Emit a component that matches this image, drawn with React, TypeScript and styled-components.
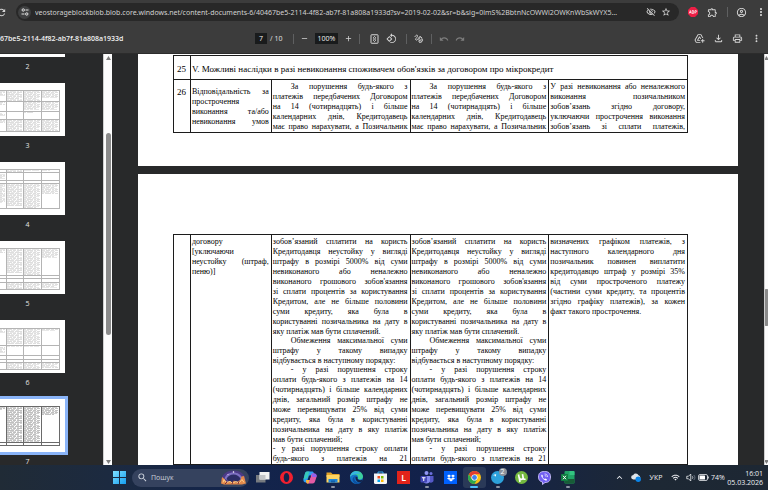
import React from 'react';
import styled, { createGlobalStyle, css } from 'styled-components';
import {
  MdAdd,
  MdAddToDrive,
  MdKeyboardArrowUp,
  MdMoreVert,
  MdOutlineAccountCircle,
  MdOutlineExtension,
  MdOutlineFileDownload,
  MdOutlinePrint,
  MdOutlineVisibilityOff,
  MdRedo,
  MdRefresh,
  MdRemove,
  MdRotate90DegreesCcw,
  MdSearch,
  MdStarBorder,
  MdUndo,
  MdWifi,
} from 'react-icons/md';
import { FaDropbox, FaTelegramPlane } from 'react-icons/fa';

const ui = '"Open Sans", "Noto Sans", sans-serif';
const uiWide = '"Noto Sans", "Open Sans", sans-serif';
const serif = '"Liberation Serif", "Times New Roman", serif';

const GlobalStyle = createGlobalStyle`
  * { box-sizing: border-box; }
  body { margin: 0; background: #28292a; }
  button, input { font: inherit; color: inherit; border: 0; padding: 0; margin: 0; background: none; }
  button { display: flex; align-items: center; justify-content: center; }
`;

const Screen = styled.div`
  display: flex;
  flex-direction: column;
  height: 100vh;
  overflow: hidden;
  font-family: ${ui};
  font-size: 7px;
  color: #e3e3e3;
`;

/* Browser chrome */

const AddressRow = styled.header`
  display: flex;
  align-items: center;
  height: 24px;
  flex: none;
  background: #3c3c3c;
`;

const IconButton = styled.button<{ $w?: number; $dim?: boolean }>`
  width: ${(p) => p.$w ?? 12}px;
  height: 16px;
  flex: none;
  color: ${(p) => (p.$dim ? '#7d7d7d' : '#d6d6d6')};
`;

const ReloadButton = styled(IconButton)`
  margin: 0 9px 0 -5px;
`;

const AddressPill = styled.div`
  display: flex;
  align-items: center;
  flex: 1;
  min-width: 0;
  height: 18px;
  padding: 0 6px 0 2px;
  border-radius: 9px;
  background: #282828;
`;

const SiteButton = styled.button`
  width: 13px;
  height: 13px;
  flex: none;
  margin-right: 4px;
  border-radius: 50%;
  background: #3f4041;
`;

const UrlInput = styled.input`
  flex: 1;
  min-width: 0;
  height: 16px;
  outline: none;
  font-family: ${uiWide};
  color: #d2d2d2;
`;

const Extensions = styled.div`
  display: flex;
  align-items: center;
  justify-content: space-between;
  flex: none;
  width: 89px;
  padding: 0 1px 0 8px;
`;

const Divider = styled.span<{ $gap?: number }>`
  width: 1px;
  height: 10px;
  flex: none;
  margin: 0 ${(p) => p.$gap ?? 0}px;
  background: #5f6061;
`;

/* PDF toolbar */

const PdfToolbar = styled.div`
  display: grid;
  grid-template-columns: minmax(0, 255fr) 212px minmax(0, 301fr);
  align-items: center;
  height: 30px;
  flex: none;
  background: #3c3c3c;
  border-bottom: 1px solid #2c2c2c;
`;

const FileName = styled.h1`
  margin: 0;
  font-size: 7px;
  line-height: 10px;
  font-weight: 600;
  white-space: nowrap;
  color: #f1f1f1;
`;

const Tools = styled.div`
  display: flex;
  align-items: center;
`;

const FieldInput = styled.input<{ $w: number }>`
  width: ${(p) => p.$w}px;
  height: 11px;
  flex: none;
  text-align: center;
  background: #191b1c;
  color: #f1f1f1;
`;

const PageTotal = styled.span`
  width: 20px;
  padding-left: 3px;
  white-space: nowrap;
`;

const ZoomGroup = styled.div`
  display: flex;
  align-items: center;
  gap: 6px;
`;

const UndoGroup = styled.div`
  display: flex;
  gap: 4px;
`;

const FileActions = styled.div`
  display: flex;
  justify-content: flex-end;
  gap: 7px;
  padding-right: 6px;
`;

/* Work area */

const WorkArea = styled.main`
  display: flex;
  flex: 1;
  min-height: 0;
  overflow: hidden;
`;

const Sidebar = styled.nav`
  width: 103px;
  flex: none;
  overflow: hidden;
  background: #28292a;
`;

const ThumbList = styled.ol`
  list-style: none;
  width: 75px;
  margin: -50px 0 0 -10px;
  padding: 0;
`;

const ThumbButton = styled.button<{ $selected: boolean }>`
  display: block;
  width: 75px;
  height: 53px;
  background: #fff;
  ${(p) =>
    p.$selected &&
    css`
      outline: 3px solid #8ab4f8;
    `}
`;

const ThumbLabel = styled.span`
  display: block;
  height: 26px;
  line-height: 20px;
  text-align: center;
  font-size: 7px;
`;

const ScrollTrack = styled.div<{ $w: number }>`
  display: flex;
  flex-direction: column;
  align-items: center;
  width: ${(p) => p.$w}px;
  flex: none;
  overflow: hidden;
  padding: 2px 0 1px;
  background: #fcfcfc;
  border-left: 1px solid #cfcfcf;
`;

const ScrollRun = styled.div<{ $before: number; $after: number }>`
  display: flex;
  flex-direction: column;
  flex: 1;
  &::before { content: ''; flex: ${(p) => p.$before}; }
  &::after { content: ''; flex: ${(p) => p.$after}; }
`;

const ScrollHandle = styled.div<{ $size: number }>`
  flex: ${(p) => p.$size};
  width: 5px;
  border-radius: 3px;
  background: #8b8b8b;
`;

const Viewer = styled.div`
  display: flex;
  flex-direction: column;
  gap: 8px;
  flex: 1;
  min-width: 0;
  overflow: hidden;
  padding: 0 26px;
  background: #28292a;
`;

const Sheet = styled.section<{ $top: number; $bottom: number }>`
  flex: none;
  padding: ${(p) => p.$top}px 50px ${(p) => p.$bottom}px 35px;
  background: #fff;
`;

const TermsTable = styled.table`
  width: 100%;
  table-layout: fixed;
  border-collapse: collapse;
  font-family: ${serif};
  font-size: 8px;
  line-height: 10px;
  color: #000;
`;

const Cell = styled.td<{ $top?: number; $center?: boolean; $large?: boolean; $soft?: boolean }>`
  padding: ${(p) => p.$top ?? 2}px 2px 0 1px;
  vertical-align: top;
  text-align: ${(p) => (p.$center ? 'center' : 'left')};
  border: 1px solid #1c1c1c;
  ${(p) =>
    p.$large &&
    css`
      font-size: 9px;
    `}
  ${(p) =>
    p.$soft &&
    css`
      border-left-color: #555;
    `}
`;

const TitleRow = styled.tr`
  height: 24px;
`;

const TitleCell = styled(Cell)`
  vertical-align: middle;
`;

const Paragraph = styled.p<{ $indent?: boolean }>`
  margin: 0;
  padding: 0;
  text-indent: ${(p) => (p.$indent ? 18 : 0)}px;
  & + & { margin-top: -1px; }
`;

const TextLine = styled.span<{ $last?: boolean }>`
  display: block;
  white-space: nowrap;
  text-align: justify;
  text-align-last: ${(p) => (p.$last ? 'left' : 'justify')};
  & + & { text-indent: 0; }
`;

/* Taskbar */

const Taskbar = styled.footer`
  display: grid;
  grid-template-columns: minmax(0, 112fr) 468px minmax(0, 188fr);
  align-items: center;
  height: 25px;
  flex: none;
  background: linear-gradient(90deg, #202b36 0%, #1c2a40 14%, #13244b 30%, #12214a 58%, #182540 72%, #1d2834 85%, #1d2733 100%);
`;

const AppStrip = styled.div`
  grid-column: 2;
  display: flex;
  align-items: center;
`;

const StartButton = styled.button`
  width: 14px;
  height: 20px;
  flex: none;
  margin-right: 6px;
`;

const SearchBox = styled.label`
  display: flex;
  align-items: center;
  width: 117px;
  height: 18px;
  flex: none;
  margin-right: 2px;
  padding: 0 2px 0 5px;
  border-radius: 9px;
  background: #35425e;
  color: #d5dae3;
`;

const SearchInput = styled.input`
  flex: 1;
  min-width: 0;
  margin-left: 3px;
  outline: none;
  font-size: 7px;
  &::placeholder { color: #c9cfda; opacity: 1; }
`;

const Apps = styled.div`
  display: grid;
  grid-template-columns: repeat(14, 1fr);
  flex: 1;
`;

const AppButton = styled.button<{ $active?: boolean; $running?: boolean }>`
  position: relative;
  height: 21px;
  border-radius: 3px;
  background: ${(p) => (p.$active ? '#2a3958' : 'none')};
  ${(p) =>
    (p.$running || p.$active) &&
    css`
      &::after {
        content: '';
        position: absolute;
        left: 50%;
        bottom: 0;
        width: ${p.$active ? 8 : 4}px;
        height: 2px;
        transform: translateX(-50%);
        border-radius: 1px;
        background: ${p.$active ? '#4cc2ff' : '#8d95a5'};
      }
    `}
`;

const Tile = styled.span<{ $bg: string }>`
  display: flex;
  align-items: center;
  justify-content: center;
  width: 13px;
  height: 13px;
  background: ${(p) => p.$bg};
  color: #fff;
  font-size: 9px;
  font-weight: 600;
`;

const Badge = styled.span`
  position: absolute;
  top: 1px;
  right: 3px;
  width: 8px;
  height: 8px;
  border-radius: 50%;
  background: #8a929c;
  color: #fff;
  font-size: 7px;
  line-height: 8px;
  text-align: center;
`;

const Tray = styled.div`
  display: flex;
  align-items: center;
  justify-content: flex-end;
  padding-right: 5px;
  color: #eef0f3;
`;

const TrayButton = styled.button<{ $w: number }>`
  width: ${(p) => p.$w}px;
  height: 18px;
  flex: none;
`;

const Battery = styled.span`
  display: flex;
  align-items: center;
  gap: 2px;
  width: 27px;
  white-space: nowrap;
`;

const Clock = styled.time`
  width: 38px;
  line-height: 9px;
  text-align: right;
`;

/* Drawings */

const SiteIcon = () => (
  <svg width="8" height="8" viewBox="0 0 16 16" fill="none" stroke="#e3e3e3" strokeWidth="2">
    <circle cx="4.5" cy="4" r="2.4" />
    <path d="M9 4h6M1 12h6" />
    <circle cx="11.5" cy="12" r="2.4" />
  </svg>
);

const AbpIcon = () => (
  <svg width="10" height="10" viewBox="0 0 20 20">
    <path d="M6 0h8l6 6v8l-6 6H6l-6-6V6z" fill="#ed1e45" />
    <path d="M2.6 13l2-6 2 6M3.2 11h2.8M8.4 7v6h2c2.2 0 2.2-3 0-3 1.8 0 1.8-3 0-3zM14 13V7h1.6c2.4 0 2.4 3.4 0 3.4H14" fill="none" stroke="#fff" strokeWidth="1.4" />
  </svg>
);

const FitIcon = () => (
  <svg width="9" height="10" viewBox="0 0 18 20" fill="none" stroke="currentColor" strokeWidth="2">
    <rect x="2" y="1.5" width="14" height="17" rx="1" />
    <path d="M6.4 7.5L9 5l2.6 2.5M6.4 12.5L9 15l2.6-2.5M6 10h6" />
  </svg>
);

const InkIcon = () => (
  <svg width="10" height="10" viewBox="0 0 20 20" fill="none" stroke="currentColor" strokeWidth="1.9" strokeLinecap="round">
    <path d="M2 5c2-3 5-4 5-1S1 10 4 12s6-7 8-7-4 7-2 8 3-2 5-3 3 3 1 5-5 3-6 1 2-3 5-2" />
    <path d="M13 5.5l3 2.5" />
  </svg>
);

type Box = [number, number, number, number];
type Preview = { page: number; rows: number[]; blocks: Box[]; dark?: boolean };

const pagePreviews: Preview[] = [
  { page: 2, rows: [8, 30, 48], blocks: [] },
  {
    page: 3,
    rows: [7, 18, 28, 36, 48],
    blocks: [
      [10, 8, 15, 12], [17, 8, 32, 17], [34, 8, 50, 17], [52, 8, 68, 14],
      [10, 19, 15, 21], [34, 19, 50, 26], [52, 19, 68, 26],
      [10, 30, 15, 32], [34, 29, 43, 29],
      [10, 37, 15, 39], [17, 37, 32, 47], [34, 37, 50, 47], [52, 37, 68, 47],
    ],
  },
  {
    page: 4,
    rows: [7, 10, 18, 21, 46],
    blocks: [
      [17, 8, 32, 9], [34, 8, 50, 8], [52, 8, 60, 8], [10, 12, 15, 16],
      [10, 22, 15, 40], [17, 22, 32, 43], [34, 22, 50, 45], [52, 22, 68, 31],
    ],
  },
  {
    page: 5,
    rows: [7, 34, 37, 41, 48],
    blocks: [
      [10, 8, 15, 11], [17, 8, 32, 31], [34, 8, 50, 33], [52, 8, 68, 16],
      [17, 42, 32, 47], [34, 42, 50, 47], [52, 42, 68, 46],
    ],
  },
  {
    page: 6,
    rows: [8, 25, 35, 39, 42, 49],
    blocks: [
      [10, 9, 15, 12], [17, 9, 32, 23], [34, 9, 50, 23], [52, 9, 68, 10],
      [10, 27, 15, 32], [17, 26, 32, 26], [34, 26, 50, 26],
      [17, 43, 32, 48], [34, 43, 50, 48], [52, 43, 68, 47],
    ],
  },
  {
    page: 7,
    dark: true,
    rows: [7, 43, 46],
    blocks: [[10, 8, 15, 10], [17, 8, 32, 42], [34, 8, 50, 42], [52, 8, 68, 15]],
  },
];

const columnRules = [1, 16, 33, 51, 69];
const dashes = ['5 1 3 1', '2 1 6 1', '7 1', '3 1 4 1'];

const CopyBlock = ({ box: [x1, y1, x2, y2], color }: { box: Box; color: string }) => (
  <g stroke={color}>
    {Array.from({ length: y2 - y1 + 1 }, (_, i) => y1 + i).map((y) => (
      <path
        key={y}
        d={`M${x1} ${y + 0.5}H${x2 - ((y * 7) % 5 === 0 ? 3 : 0)}`}
        strokeDasharray={dashes[(y * 3 + x1) % 4]}
        opacity={y % 2 ? 1 : 0.7}
      />
    ))}
  </g>
);

const PagePreview = ({ rows, blocks, dark }: Omit<Preview, 'page'>) => (
  <svg width="75" height="53" viewBox="0 0 75 53">
    {blocks.map((box) => (
      <CopyBlock key={box.join()} box={box} color={dark ? '#c0c0c0' : '#dedede'} />
    ))}
    <g stroke={dark ? '#6a6a6a' : '#b4b4b4'}>
      {rows.map((y) => (
        <path key={y} d={`M1 ${y + 0.5}H69`} />
      ))}
      {columnRules.map((x) => (
        <path key={x} d={`M${x + 0.5} ${rows[0]}V${rows[rows.length - 1] + 1}`} />
      ))}
    </g>
  </svg>
);

const ArrowMark = ({ down }: { down?: boolean }) => (
  <svg width="5" height="4" viewBox="0 0 5 4">
    <path d={down ? 'M0 0h5L2.5 4z' : 'M0 4h5L2.5 0z'} fill="#7d7d7d" />
  </svg>
);

const StartIcon = () => (
  <svg width="13" height="13" viewBox="0 0 26 26">
    <defs>
      <linearGradient id="start" x1="0" y1="0" x2="1" y2="1">
        <stop offset="0" stopColor="#7fe0ff" />
        <stop offset="1" stopColor="#149df0" />
      </linearGradient>
    </defs>
    <path d="M0 0h12v12H0zM14 0h12v12H14zM0 14h12v12H0zM14 14h12v12H14z" fill="url(#start)" />
  </svg>
);

const SearchArt = () => (
  <svg width="27" height="15" viewBox="0 0 54 30">
    <path d="M3 19C5 7 15 1 27 1s22 6 24 18l-6 9H9z" fill="#4b3a86" />
    <path d="M9 17C12 8 19 5 27 5s15 4 18 12l-8 5H17z" fill="#7d70c2" />
    <path d="M13 18c2-6 8-9 14-9s12 3 14 9l-6 6H19z" fill="#2c2d66" />
    <path d="M2 27l2-13 4 3 3 4 4 4 5-3 4 3 4-4 4 4 5-3 4-2 2-7 5-1 4 15-8 2H8z" fill="#e2894a" />
    <path d="M6 25l2-6 4 6 8-2 5 3 7-3 6 3 6-7 4 6" fill="none" stroke="#ffd08a" strokeWidth="2" />
    <path d="M10 28l4-4M24 28l2-5M36 28l2-5" stroke="#7b2c3a" strokeWidth="2" />
    <circle cx="27" cy="4" r="1.5" fill="#fff" />
    <circle cx="16" cy="9" r="1" fill="#ffd9f0" />
  </svg>
);

const TaskViewIcon = () => (
  <svg width="14" height="13" viewBox="0 0 28 26">
    <rect x="0" y="8" width="19" height="15" fill="#777b80" />
    <rect x="7" y="2" width="20" height="15" fill="#f1f1f1" />
    <rect x="7" y="8" width="12" height="9" fill="#c3c5c8" />
  </svg>
);

const OperaIcon = () => (
  <svg width="13" height="13" viewBox="0 0 26 26">
    <path fillRule="evenodd" d="M13 0a13 13 0 100 26 13 13 0 000-26zm0 4c3.3 0 5.5 4 5.5 9s-2.2 9-5.5 9-5.5-4-5.5-9S9.7 4 13 4z" fill="#f0202f" />
  </svg>
);

const CopilotIcon = () => (
  <svg width="14" height="13" viewBox="0 0 28 26">
    <path d="M9 1h9c2 0 3 1 3.5 3L23 9h-8l-3 9-2 5H6c-4 0-6-3-5-7L4 5c.8-2.5 2-4 5-4z" fill="#2b9df4" />
    <path d="M4 5C5 2 6 1 9 1h4L9 14l-8 3z" fill="#37c8b8" />
    <path d="M19 25h-9c-2 0-3-1-3.5-3L6 18h7l3-9 2-4h4c4 0 6 3 5 7l-3 9c-.8 2.5-2 4-5 4z" fill="#e45ba5" />
    <path d="M6 18h7l-2 7h-1c-2 0-3-1-3.5-3z" fill="#f6b73c" />
    <path d="M18 5h4c4 0 6 3 5 7h-9z" fill="#9061ee" />
    <path d="M13 18l3-9h-4l-3 9z" fill="#13234b" />
  </svg>
);

const FolderIcon = () => (
  <svg width="14" height="13" viewBox="0 0 28 26">
    <path d="M1 3h9l3 3h14v6H1z" fill="#e2a32a" />
    <path d="M1 8h26v15H1z" fill="#ffd562" />
    <path d="M5 16h18v7H5z" fill="#1f86d8" />
    <path d="M10 19h8v4h-8z" fill="#145fa8" />
  </svg>
);

const EdgeIcon = () => (
  <svg width="13" height="13" viewBox="0 0 26 26">
    <circle cx="13" cy="13" r="13" fill="#1576c9" />
    <path d="M0 12C1 4 7 0 13 0c8 0 13 6 13 11 0 4-3 6-6 6-4 0-5-2-4-4 1-3-2-6-6-6-5 0-9 2-10 5z" fill="#3dcf9d" />
    <path d="M0 12C1 5 6 1 12 1c5 0 8 3 8 6-2-2-5-2-8-1-5 0-9 2-12 6z" fill="#36b5e4" />
    <path d="M9 13c-1 6 4 11 11 10 2 0 3-1 4-2-3 4-7 5-11 5-5-1-8-5-8-9 0-3 2-6 6-7-1 1-2 2-2 3z" fill="#0c4f9f" />
    <path d="M11 11c4 0 5 3 4 4 0 2 3 4 8 3l2-1-2 5c-7 2-13-2-12-11z" fill="#13234b" />
  </svg>
);

const StoreIcon = () => (
  <svg width="13" height="13" viewBox="0 0 26 26">
    <path d="M8 6V2h10v4" fill="none" stroke="#35a9ea" strokeWidth="2" />
    <path d="M0 5h26v18a3 3 0 01-3 3H3a3 3 0 01-3-3z" fill="#f2f4f7" />
    <path d="M7 10h5v5H7z" fill="#f25022" />
    <path d="M14 10h5v5h-5z" fill="#7fba00" />
    <path d="M7 17h5v5H7z" fill="#00a4ef" />
    <path d="M14 17h5v5h-5z" fill="#ffb900" />
  </svg>
);

const TeamsIcon = () => (
  <svg width="14" height="13" viewBox="0 0 28 26">
    <circle cx="13" cy="4" r="4" fill="#8f95f2" />
    <circle cx="22" cy="5" r="3" fill="#6b70de" />
    <path d="M17 10h10v9c0 4-6 6-9 3z" fill="#5559c8" />
    <path d="M6 10h14v9c0 8-14 8-14 0z" fill="#8389ee" />
    <rect x="1" y="10" width="13" height="13" rx="2" fill="#4347b5" />
    <path d="M4 13.5h7M7.5 13.5V20" stroke="#fff" strokeWidth="2" />
  </svg>
);

const ChromeIcon = () => (
  <svg width="13" height="13" viewBox="0 0 26 26">
    <circle cx="13" cy="13" r="13" fill="#fbc116" />
    <path d="M1.7 6.5A13 13 0 0124.3 6.5H13L8 16z" fill="#e33b2e" />
    <path d="M1.7 6.5A13 13 0 0013 26l5.6-9.8L13 13l-5.6 3.2z" fill="#2da94f" />
    <circle cx="13" cy="13" r="6.2" fill="#fff" />
    <circle cx="13" cy="13" r="4.8" fill="#3f7ff0" />
  </svg>
);

const TelegramIcon = () => (
  <svg width="13" height="13" viewBox="0 0 26 26">
    <circle cx="13" cy="13" r="13" fill="#2da1db" />
    <FaTelegramPlane x="4" y="5" width="16" height="16" color="#fff" />
  </svg>
);

const TorrentIcon = () => (
  <svg width="13" height="13" viewBox="0 0 26 26">
    <circle cx="13" cy="13" r="13" fill="#74b83f" />
    <path d="M7 7l3 15M8.5 13c1 5 8 5 7.5 0L15 6.5l1.5 8c.4 2 2 2.5 4.5 1.5" fill="none" stroke="#fff" strokeWidth="3.2" />
  </svg>
);

const ViberIcon = () => (
  <svg width="13" height="14" viewBox="0 0 26 28">
    <path d="M13 1c8 0 12 3 12 11s-4 11-11 11l-5 4v-5c-5-1-8-4-8-10C1 4 5 1 13 1z" fill="#7360f2" stroke="#c9c2fb" strokeWidth="1.8" />
    <path d="M8 7c-2 1-2 3 0 6s5 5 7 6 3-1 3-2l-3-2-2 1c-2-1-3-2-4-4l1-2z" fill="#fff" />
    <path d="M13 6c4 0 6 2 6 6M13.5 9c2 0 2.5 1 2.5 2.5" fill="none" stroke="#fff" strokeWidth="1.4" />
  </svg>
);

const ExcelIcon = () => (
  <svg width="14" height="13" viewBox="0 0 28 26">
    <rect x="7" y="0" width="20" height="25" rx="2" fill="#21a366" />
    <path d="M17 0h8a2 2 0 012 2v6H17z" fill="#33c481" />
    <path d="M7 16h20v7a2 2 0 01-2 2H9a2 2 0 01-2-2z" fill="#185c37" />
    <rect x="0" y="6" width="14" height="14" rx="1" fill="#107c41" />
    <path d="M4 9.5l6 7M10 9.5l-6 7" stroke="#fff" strokeWidth="2" />
  </svg>
);

const CloudIcon = () => (
  <svg width="10" height="9" viewBox="0 0 20 18">
    <path d="M5 13a4.5 4.5 0 01-.5-9A6 6 0 0115 4.5 4.5 4.5 0 0116 13z" fill="#dfe4ea" />
    <circle cx="14.5" cy="12.5" r="5.4" fill="#0a84e8" />
  </svg>
);

const SpeakerIcon = () => (
  <svg width="10" height="9" viewBox="0 0 20 18" fill="none" stroke="currentColor" strokeWidth="1.6">
    <path d="M1.5 6.5h3.5L9.5 2v14L5 11.5H1.5z" />
    <path d="M12.5 6.5c1.5 1.5 1.5 3.5 0 5" />
    <path d="M15.5 4c3 3 3 7 0 10" stroke="#7b8593" />
  </svg>
);

const BatteryIcon = () => (
  <svg width="11" height="7" viewBox="0 0 22 14">
    <rect x="1" y="1" width="18" height="12" rx="3" fill="none" stroke="#e4e7eb" strokeWidth="1.6" />
    <rect x="3" y="3" width="11" height="8" rx="1" fill="#fff" />
    <path d="M20.5 5v4" stroke="#e4e7eb" strokeWidth="2" />
  </svg>
);

/* Document copy, set line by line as in the printed contract */

type Para = { lines: string[]; indent?: boolean; open?: boolean };

const liability: Para[] = [{ open: true, lines: ['Відповідальність за', 'прострочення', 'виконання та/або', 'невиконання умов'] }];

const breach: Para[] = [
  {
    indent: true,
    open: true,
    lines: ['За порушення будь-якого з', 'платежів передбачених Договором', 'на 14 (чотирнадцять) і більше', 'календарних днів, Кредитодавець', 'має право нарахувати, а Позичальник'],
  },
];

const failure: Para[] = [
  {
    open: true,
    lines: ['У разі невиконання або неналежного', 'виконання позичальником', 'зобов’язань згідно договору,', 'уключаючи прострочення виконання', 'зобов’язань зі сплати платежів,'],
  },
];

const liabilityRest: Para[] = [{ lines: ['договору', '[уключаючи', 'неустойку (штраф,', 'пеню)]'] }];

const penalty: Para[] = [
  {
    lines: [
      'зобов’язаний сплатити на користь',
      'Кредитодавця неустойку у вигляді',
      'штрафу в розмірі 5000% від суми',
      'невиконаного або неналежно',
      "виконаного грошового зобов'язання",
      'зі сплати процентів за користування',
      'Кредитом, але не більше половини',
      'суми кредиту, яка була в',
      'користуванні позичальника на дату в',
      'яку платіж мав бути сплачений.',
    ],
  },
  { indent: true, lines: ['Обмеження максимальної суми', 'штрафу у такому випадку', 'відбувається в наступному порядку:'] },
  {
    indent: true,
    lines: [
      '- у разі порушення строку',
      'оплати будь-якого з платежів на 14',
      '(чотирнадцять) і більше календарних',
      'днів, загальний розмір штрафу не',
      'може перевищувати 25% від суми',
      'кредиту, яка була в користуванні',
      'позичальника на дату в яку платіж',
      'мав бути сплачений;',
    ],
  },
];

const penaltyA: Para[] = [...penalty, { open: true, lines: ['- у разі порушення строку оплати', 'будь-якого з платежів на 21'] }];
const penaltyB: Para[] = [...penalty, { open: true, indent: true, lines: ['- у разі порушення строку', 'оплати будь-якого з платежів на 21'] }];

const schedule: Para[] = [
  {
    lines: [
      'визначених графіком платежів, з',
      'наступного календарного дня',
      'позичальник повинен виплатити',
      'кредитодавцю штраф у розмірі 35%',
      'від суми простроченого платежу',
      '(частини суми кредиту, та процентів',
      'згідно графіку платежів), за кожен',
      'факт такого прострочення.',
    ],
  },
];

const raggedLines = new Set(['прострочення', 'договору', '[уключаючи']);

const Copy = ({ paras }: { paras: Para[] }) => (
  <>
    {paras.map((para, i) => (
      <Paragraph key={i} $indent={para.indent}>
        {para.lines.map((line, n) => (
          <TextLine key={line} $last={raggedLines.has(line) || (!para.open && n === para.lines.length - 1)}>
            {line}
          </TextLine>
        ))}
      </Paragraph>
    ))}
  </>
);

const ColumnWidth = styled.col<{ $share: number }>`
  width: calc(100% * ${(p) => p.$share} / 515);
`;

const Columns = () => (
  <colgroup>
    {[17, 81, 139, 139, 139].map((w, i) => (
      <ColumnWidth key={i} $share={w} />
    ))}
  </colgroup>
);

const url =
  'veostorageblockblob.blob.core.windows.net/content-documents-6/40467be5-2114-4f82-ab7f-81a808a1933d?sv=2019-02-02&sr=b&sig=0lmS%2BbtnNcOWWi2OWKnWbSkWYX5…';

export default function App() {
  return (
    <Screen>
      <GlobalStyle />
      <AddressRow>
        <ReloadButton aria-label="Reload"><MdRefresh size={11} /></ReloadButton>
        <AddressPill>
          <SiteButton aria-label="Site information"><SiteIcon /></SiteButton>
          <UrlInput aria-label="Address" readOnly value={url} />
          <IconButton $w={16} aria-label="Tracking"><MdOutlineVisibilityOff size={10} /></IconButton>
          <IconButton $w={14} aria-label="Bookmark"><MdStarBorder size={10} /></IconButton>
        </AddressPill>
        <Extensions>
          <IconButton aria-label="Adblock Plus"><AbpIcon /></IconButton>
          <IconButton aria-label="Extensions"><MdOutlineExtension size={11} /></IconButton>
          <Divider />
          <IconButton aria-label="Profile"><MdOutlineAccountCircle size={11} /></IconButton>
          <IconButton aria-label="Browser menu"><MdMoreVert size={12} /></IconButton>
        </Extensions>
      </AddressRow>

      <PdfToolbar>
        <FileName>67be5-2114-4f82-ab7f-81a808a1933d</FileName>
        <Tools>
          <FieldInput $w={12} aria-label="Page" defaultValue="7" />
          <PageTotal>/ 10</PageTotal>
          <Divider $gap={6} />
          <ZoomGroup>
            <IconButton $w={9} aria-label="Zoom out"><MdRemove size={9} /></IconButton>
            <FieldInput $w={23} aria-label="Zoom" defaultValue="100%" />
            <IconButton $w={9} aria-label="Zoom in"><MdAdd size={9} /></IconButton>
          </ZoomGroup>
          <Divider $gap={6} />
          <IconButton $w={17} aria-label="Fit to page"><FitIcon /></IconButton>
          <IconButton $w={17} aria-label="Rotate"><MdRotate90DegreesCcw size={11} /></IconButton>
          <Divider $gap={6} />
          <IconButton aria-label="Draw"><InkIcon /></IconButton>
          <Divider $gap={6} />
          <UndoGroup>
            <IconButton $dim aria-label="Undo"><MdUndo size={10} /></IconButton>
            <IconButton $dim aria-label="Redo"><MdRedo size={10} /></IconButton>
          </UndoGroup>
        </Tools>
        <FileActions>
          <IconButton aria-label="Save to Drive"><MdAddToDrive size={11} /></IconButton>
          <IconButton aria-label="Download"><MdOutlineFileDownload size={11} /></IconButton>
          <IconButton aria-label="Print"><MdOutlinePrint size={11} /></IconButton>
          <IconButton aria-label="More"><MdMoreVert size={11} /></IconButton>
        </FileActions>
      </PdfToolbar>

      <WorkArea>
        <Sidebar aria-label="Pages">
          <ThumbList>
            {pagePreviews.map(({ page, rows, blocks, dark }) => (
              <li key={page}>
                <ThumbButton $selected={page === 7} aria-label={`Page ${page}`}>
                  <PagePreview rows={rows} blocks={blocks} dark={dark} />
                </ThumbButton>
                <ThumbLabel>{page}</ThumbLabel>
              </li>
            ))}
          </ThumbList>
        </Sidebar>
        <ScrollTrack $w={9}>
          <ArrowMark />
          <ScrollRun $before={73} $after={125}>
            <ScrollHandle $size={201} />
          </ScrollRun>
          <ArrowMark down />
        </ScrollTrack>

        <Viewer>
          <Sheet $top={1} $bottom={33}>
            <TermsTable>
              <Columns />
              <tbody>
                <TitleRow>
                  <TitleCell $large $center>25</TitleCell>
                  <TitleCell $large colSpan={4}>V. Можливі наслідки в разі невиконання споживачем обов'язків за договором про мікрокредит</TitleCell>
                </TitleRow>
                <tr>
                  <Cell $large $top={7} $center>26</Cell>
                  <Cell $top={7}><Copy paras={liability} /></Cell>
                  <Cell $soft><Copy paras={breach} /></Cell>
                  <Cell $soft><Copy paras={breach} /></Cell>
                  <Cell $soft><Copy paras={failure} /></Cell>
                </tr>
              </tbody>
            </TermsTable>
          </Sheet>
          <Sheet $top={60} $bottom={0}>
            <TermsTable>
              <Columns />
              <tbody>
                <tr>
                  <Cell />
                  <Cell><Copy paras={liabilityRest} /></Cell>
                  <Cell $soft><Copy paras={penaltyA} /></Cell>
                  <Cell $soft><Copy paras={penaltyB} /></Cell>
                  <Cell $soft><Copy paras={schedule} /></Cell>
                </tr>
              </tbody>
            </TermsTable>
          </Sheet>
        </Viewer>
        <ScrollTrack $w={4}>
          <ArrowMark />
          <ScrollRun $before={228} $after={134}>
            <ScrollHandle $size={37} />
          </ScrollRun>
          <ArrowMark down />
        </ScrollTrack>
      </WorkArea>

      <Taskbar>
        <AppStrip>
          <StartButton aria-label="Start"><StartIcon /></StartButton>
          <SearchBox>
            <MdSearch size={11} />
            <SearchInput placeholder="Пошук" aria-label="Пошук" />
            <SearchArt />
          </SearchBox>
          <Apps>
            <AppButton aria-label="Task view"><TaskViewIcon /></AppButton>
            <AppButton aria-label="Opera"><OperaIcon /></AppButton>
            <AppButton aria-label="Copilot"><CopilotIcon /></AppButton>
            <AppButton $running aria-label="Explorer"><FolderIcon /></AppButton>
            <AppButton aria-label="Edge"><EdgeIcon /></AppButton>
            <AppButton aria-label="Store"><StoreIcon /></AppButton>
            <AppButton><Tile $bg="#e2231a">L</Tile></AppButton>
            <AppButton $running aria-label="Teams"><TeamsIcon /></AppButton>
            <AppButton aria-label="Dropbox"><Tile $bg="#0061fe"><FaDropbox size={8} /></Tile></AppButton>
            <AppButton $active aria-label="Chrome"><ChromeIcon /></AppButton>
            <AppButton $running aria-label="Telegram"><TelegramIcon /><Badge>2</Badge></AppButton>
            <AppButton aria-label="Torrent"><TorrentIcon /></AppButton>
            <AppButton aria-label="Viber"><ViberIcon /></AppButton>
            <AppButton $running aria-label="Excel"><ExcelIcon /></AppButton>
          </Apps>
        </AppStrip>
        <Tray>
          <TrayButton $w={14} aria-label="Hidden icons"><MdKeyboardArrowUp size={11} /></TrayButton>
          <TrayButton $w={20} aria-label="OneDrive"><CloudIcon /></TrayButton>
          <TrayButton $w={20}>УКР</TrayButton>
          <TrayButton $w={18} aria-label="Wi-Fi"><MdWifi size={9} /></TrayButton>
          <TrayButton $w={14} aria-label="Volume"><SpeakerIcon /></TrayButton>
          <Battery><BatteryIcon />74%</Battery>
          <Clock>16:01<br />05.03.2026</Clock>
        </Tray>
      </Taskbar>
    </Screen>
  );
}
